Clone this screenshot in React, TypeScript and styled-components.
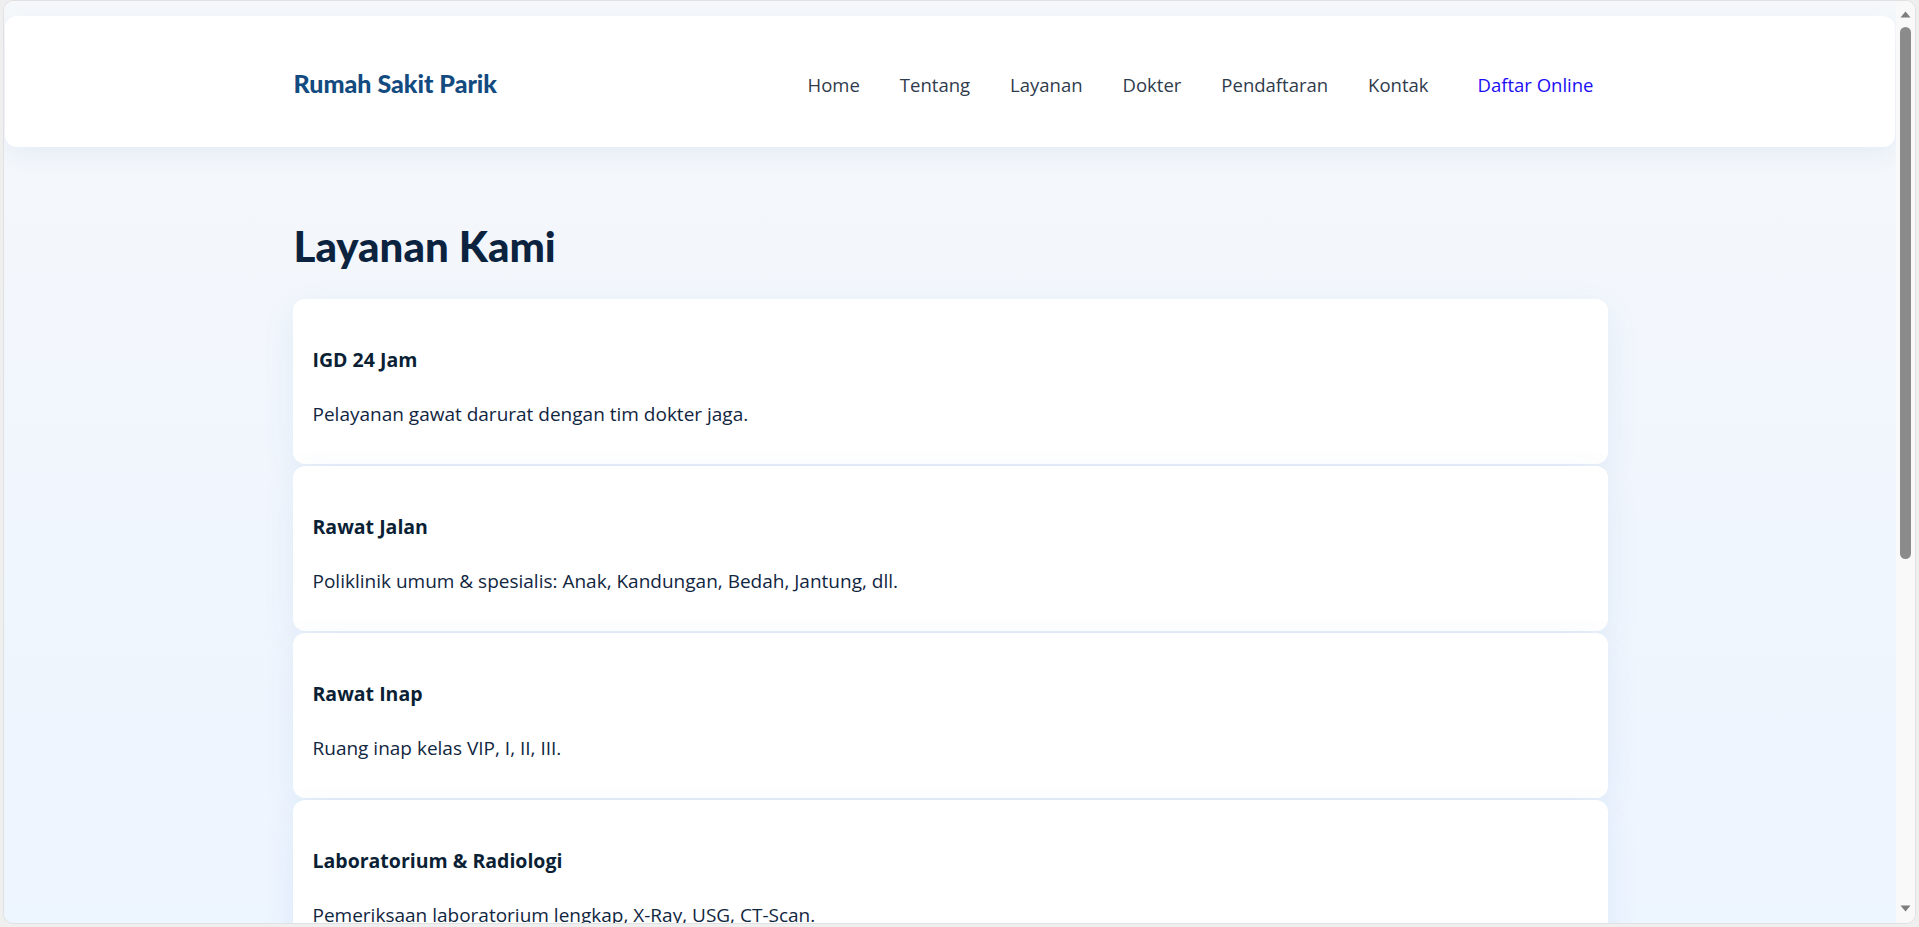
import React from "react";
import styled, { createGlobalStyle } from "styled-components";

const Global = createGlobalStyle`
  html, body { margin: 0; padding: 0; height: 100%; }
  body {
    background: #efefef;
    font-family: "Open Sans", "Noto Sans", Arial, sans-serif;
    overflow: hidden;
  }
  #root { height: 100%; }
  * { box-sizing: border-box; }
`;

const Frame = styled.div`
  height: 100vh;
  padding: 1px 4px 4px 4px;
  display: flex;
`;

const Window = styled.div`
  flex: 1;
  display: flex;
  border-radius: 9px;
  overflow: hidden;
  box-shadow: 0 0 0 1px #e1e1e1;
  background: linear-gradient(180deg, #f5f8fb 0%, #f1f6fd 50%, #edf5ff 100%);
`;

const Viewport = styled.div`
  flex: 1;
  overflow: hidden;
  min-width: 0;
`;

const Rail = styled.div`
  width: 19px;
  flex: none;
  background: #f9f9f9;
  display: flex;
  flex-direction: column;
  align-items: center;
  padding: 10px 0 11px;
`;

const Thumb = styled.div`
  width: 11px;
  height: 532px;
  margin-top: 9px;
  border-radius: 6px;
  background: #8b8b8b;
`;

const ArrowDown = styled.svg`
  margin-top: auto;
  display: block;
`;

const ArrowUp = styled.svg`
  display: block;
`;

const Header = styled.header`
  margin: 15px 1px 0;
  height: 131px;
  background: #ffffff;
  border-radius: 12px;
  box-shadow: 0 8px 24px rgba(15, 76, 129, 0.06);
  display: flex;
  align-items: center;
`;

const Container = styled.div`
  width: 100%;
  max-width: 1315px;
  margin: 0 auto;
`;

const HeaderInner = styled(Container)`
  display: flex;
  align-items: center;
  justify-content: space-between;
`;

const Logo = styled.a`
  font-family: Lato, "Open Sans", sans-serif;
  font-weight: 900;
  font-size: 25px;
  color: #134b80;
  text-decoration: none;
  margin-left: 1px;
  margin-top: 3px;
`;

const Nav = styled.nav`
  display: flex;
  align-items: center;
  gap: 40px;
  margin-top: 5px;
`;

const NavLink = styled.a`
  font-size: 18.5px;
  color: #2f3b4c;
  text-decoration: none;
`;

const CtaLink = styled.a`
  font-size: 18.5px;
  color: #1a0df5;
  text-decoration: none;
  padding: 8px 14px 8px 9px;
`;

const Main = styled(Container)`
  padding-top: 74px;
  padding-bottom: 80px;
`;

const Title = styled.h1`
  font-family: Lato, "Open Sans", sans-serif;
  font-weight: 900;
  font-size: 42px;
  line-height: 1.2;
  color: #0c2340;
  margin: 0 0 28px 1px;
`;

const CardList = styled.div`
  display: flex;
  flex-direction: column;
  gap: 2px;
`;

const Card = styled.article`
  background: #ffffff;
  border-radius: 12px;
  padding: 24px 20px;
  box-shadow: 0 10px 34px rgba(30, 90, 160, 0.075);
`;

const CardTitle = styled.h3`
  margin: 24px 0 0;
  font-size: 19.5px;
  line-height: 26px;
  font-weight: 700;
  color: #0b1f35;
`;

const CardText = styled.p`
  margin: 28px 0 13px;
  font-size: 19px;
  line-height: 26px;
  color: #11263f;
`;

const services = [
  { title: "IGD 24 Jam", text: "Pelayanan gawat darurat dengan tim dokter jaga." },
  { title: "Rawat Jalan", text: "Poliklinik umum & spesialis: Anak, Kandungan, Bedah, Jantung, dll." },
  { title: "Rawat Inap", text: "Ruang inap kelas VIP, I, II, III." },
  { title: "Laboratorium & Radiologi", text: "Pemeriksaan laboratorium lengkap, X-Ray, USG, CT-Scan." },
  { title: "Farmasi", text: "Apotek 24 jam dengan ketersediaan obat lengkap." },
  { title: "Medical Check Up", text: "Paket pemeriksaan kesehatan untuk individu dan perusahaan." },
  { title: "Ambulans", text: "Layanan ambulans siaga 24 jam." },
];

const navItems = ["Home", "Tentang", "Layanan", "Dokter", "Pendaftaran", "Kontak"];

export default function App() {
  return (
    <>
      <Global />
      <Frame>
        <Window>
          <Viewport>
            <Header>
              <HeaderInner>
                <Logo href="#">Rumah Sakit Parik</Logo>
                <Nav>
                  {navItems.map((n) => (
                    <NavLink key={n} href="#">{n}</NavLink>
                  ))}
                  <CtaLink href="#">Daftar Online</CtaLink>
                </Nav>
              </HeaderInner>
            </Header>
            <Main as="main">
              <Title>Layanan Kami</Title>
              <CardList>
                {services.map((s) => (
                  <Card key={s.title}>
                    <CardTitle>{s.title}</CardTitle>
                    <CardText>{s.text}</CardText>
                  </Card>
                ))}
              </CardList>
            </Main>
          </Viewport>
          <Rail>
            <ArrowUp width="11" height="7" viewBox="0 0 11 7">
              <path d="M5.5 0.5 L10.5 6.5 L0.5 6.5 Z" fill="#7d7d7d" />
            </ArrowUp>
            <Thumb />
            <ArrowDown width="11" height="7" viewBox="0 0 11 7">
              <path d="M0.5 0.5 L10.5 0.5 L5.5 6.5 Z" fill="#7d7d7d" />
            </ArrowDown>
          </Rail>
        </Window>
      </Frame>
    </>
  );
}
